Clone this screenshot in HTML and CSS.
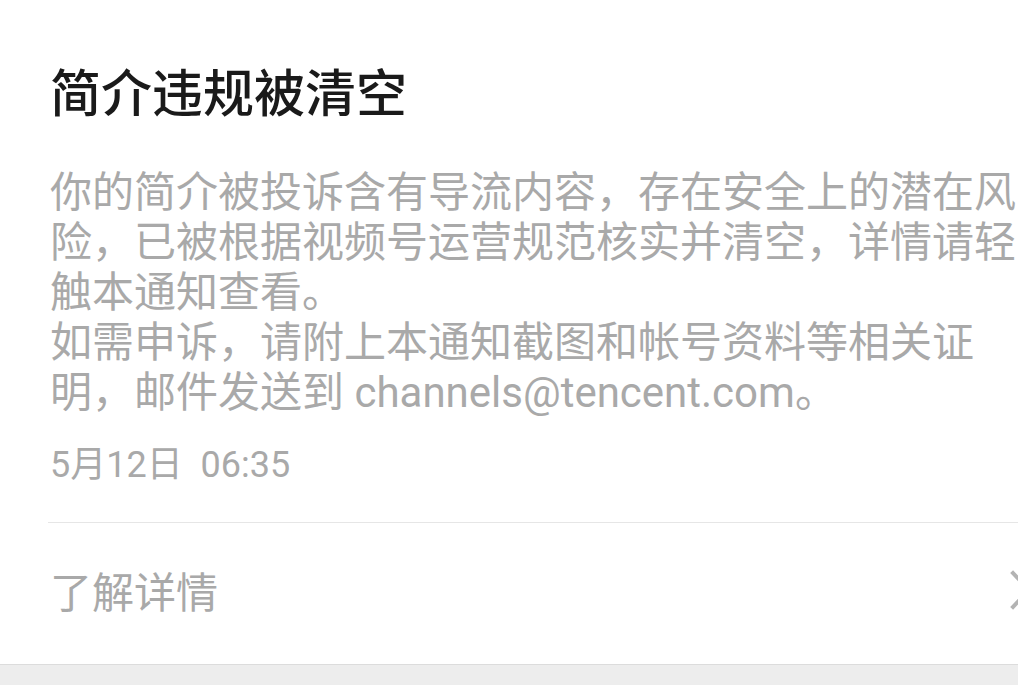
FILE: index.html
```html
<!DOCTYPE html>
<html lang="zh-CN">
<head>
    <meta charset="utf-8">
    <title>简介违规被清空</title>
    <link rel="stylesheet" href="styles.css">
</head>
<body>
    <div class="notice">
        <div class="notice-body">
            <h1 class="notice-title">简介违规被清空</h1>
            <p class="notice-desc">你的简介被投诉含有导流内容，存在安全上的潜在风险，已被根据视频号运营规范核实并清空，详情请轻触本通知查看。<br>如需申诉，请附上本通知截图和帐号资料等相关证明，邮件发送到 channels@tencent.com。</p>
            <div class="notice-time">5月12日&nbsp;&nbsp;06:35</div>
        </div>
        <div class="divider"></div>
        <div class="more-row">
            <span class="more-text">了解详情</span>
            <svg class="chevron" width="22" height="40" viewBox="0 0 22 40">
                <path d="M3 3 L19 20 L3 37" fill="none" stroke="#b3b3b3" stroke-width="4" stroke-linecap="square"/>
            </svg>
        </div>
    </div>
    <div class="footer-band"></div>
</body>
</html>
```

FILE: styles.css
```css
html, body {
    margin: 0;
    padding: 0;
    background: #ffffff;
    overflow: hidden;
}

body {
    font-family: Roboto, "Noto Sans CJK SC", sans-serif;
    width: 1018px;
    height: 685px;
}

.notice {
    padding-left: 50px;
}

.notice-body {
    padding-top: 65px;
}

.notice-title {
    margin: 0;
    font-size: 51px;
    line-height: 60px;
    font-weight: 500;
    color: #1a1a1a;
}

.notice-desc {
    margin: 43px 0 0 0;
    font-size: 42px;
    line-height: 50px;
    color: #a9a9a9;
}

.notice-time {
    margin-top: 25px;
    font-size: 36px;
    line-height: 44px;
    color: #a9a9a9;
}

.divider {
    margin-top: 35px;
    margin-left: -2px;
    height: 1px;
    background: #e6e6e6;
}

.more-row {
    height: 141px;
    display: flex;
    align-items: center;
    justify-content: space-between;
    margin-right: -14px;
}

.more-text {
    font-size: 42px;
    color: #a9a9a9;
    margin-top: -8px;
}

.chevron {
    margin-top: -8px;
}

.footer-band {
    height: 20px;
    background: #ededed;
    border-top: 1px solid #dcdcdc;
}
```
